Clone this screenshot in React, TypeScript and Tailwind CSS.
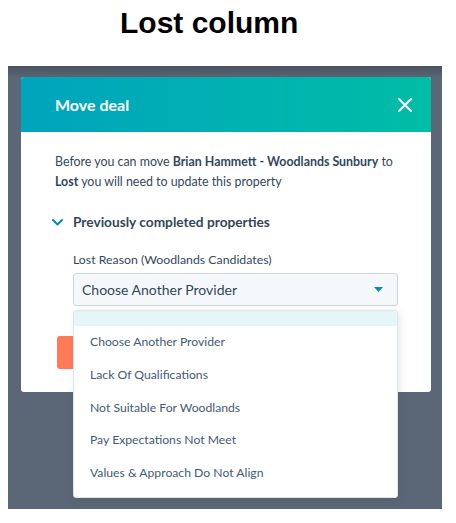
import React from "react";

const items = [
  "Choose Another Provider",
  "Lack Of Qualifications",
  "Not Suitable For Woodlands",
  "Pay Expectations Not Meet",
  "Values & Approach Do Not Align",
];

export default function App() {
  return (
    <div className="w-[456px] h-[523px] bg-white overflow-hidden">
      <div className="h-[66px] pt-[6px] pl-[120px] text-[30px] leading-[34px] font-bold text-black font-['Liberation_Sans',Arial,sans-serif]">
        Lost column
      </div>
      <div className="ml-[8px] w-[434px] h-[443px] bg-[linear-gradient(to_bottom,#48525f_0px,#5b6776_12px,#5b6776_100%)] pl-[13px] pt-[11px] font-['Lato',sans-serif]">
        <div className="w-[410px] rounded-[3px] bg-white">
          <div className="h-[55px] rounded-t-[3px] bg-gradient-to-r from-[#00a4bd] to-[#00bda5] flex items-center justify-between pl-[34px] pr-[19px]">
            <span className="text-white text-[16px] font-bold">Move deal</span>
            <svg width="14" height="14" viewBox="0 0 14 14" fill="none">
              <path d="M1 1L13 13M13 1L1 13" stroke="white" strokeWidth="2" strokeLinecap="round" />
            </svg>
          </div>
          <div className="pt-[20px] pb-[23px] pl-[34px] pr-[20px] text-[#33475b]">
            <p className="text-[12.4px] leading-[20px] whitespace-nowrap">
              Before you can move <span className="font-bold">Brian Hammett - Woodlands Sunbury</span> to
              <br />
              <span className="font-bold">Lost</span> you will need to update this property
            </p>
            <div className="mt-[20px] flex items-center h-[20px] -ml-[3px]">
              <svg width="11" height="7" viewBox="0 0 11 7" fill="none" className="mr-[10px]">
                <path d="M1 1L5.5 5.5L10 1" stroke="#0091ae" strokeWidth="2" strokeLinecap="round" strokeLinejoin="round" />
              </svg>
              <span className="text-[13.7px] font-bold">Previously completed properties</span>
            </div>
            <div className="ml-[18px] mt-[19px]">
              <div className="text-[12.3px] leading-[18px]">Lost Reason (Woodlands Candidates)</div>
              <div className="relative mt-[4px] w-[325px]">
                <div className="h-[33px] rounded-[3px] border border-[#cbd6e2] bg-[#f5f8fa] flex items-center justify-between pl-[8px] pr-[14px]">
                  <span className="text-[14px] text-[#33475b]">Choose Another Provider</span>
                  <svg width="9" height="5" viewBox="0 0 9 5">
                    <path d="M0 0H9L4.5 5Z" fill="#0091ae" />
                  </svg>
                </div>
                <div className="absolute left-0 top-[37px] w-[325px] h-[188px] z-10 rounded-[3px] border border-[#dfe3eb] bg-white shadow-[2px_2px_8px_rgba(45,62,80,0.12)] overflow-hidden">
                  <div className="h-[15px] bg-[#e5f5f8]" />
                  {items.map((t) => (
                    <div key={t} className="h-[32.7px] flex items-center pl-[16px] text-[12.2px] text-[#425b76]">
                      {t}
                    </div>
                  ))}
                </div>
              </div>
            </div>
            <div className="mt-[30px] ml-[2px] w-[80px] h-[33px] rounded-[3px] bg-[#ff7a59]" />
          </div>
        </div>
      </div>
    </div>
  );
}
